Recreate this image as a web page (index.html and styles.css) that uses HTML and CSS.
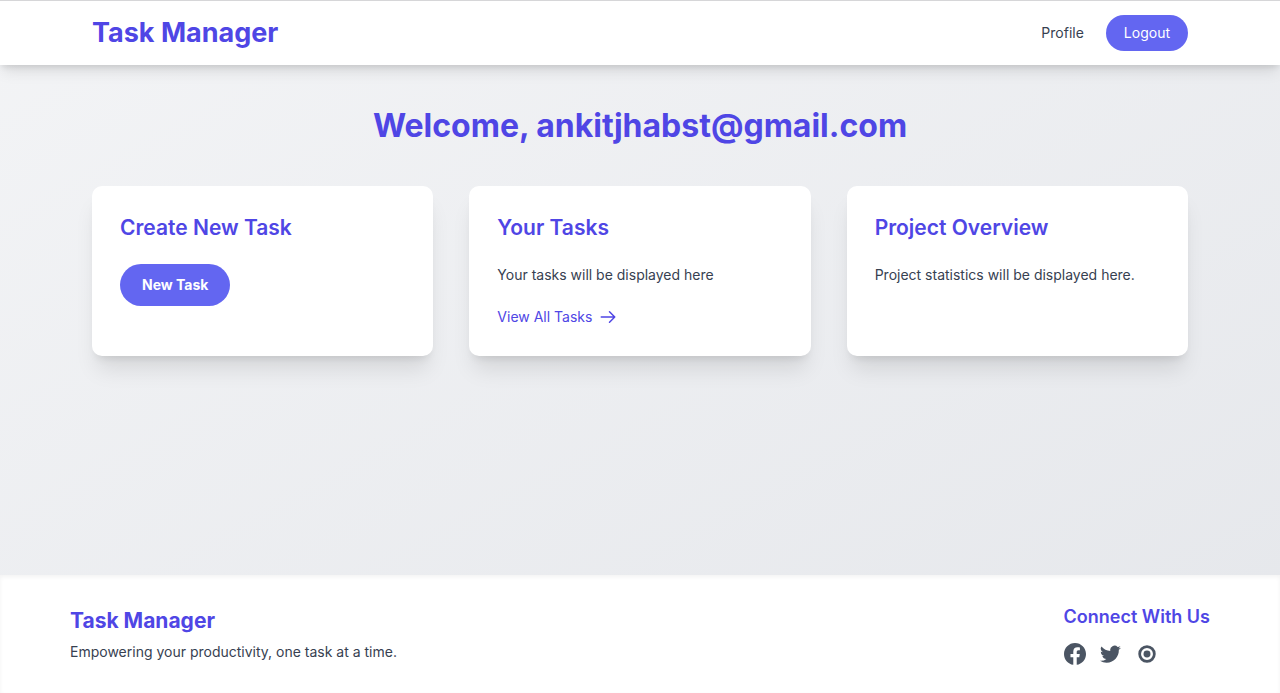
FILE: index.html
```html
<!DOCTYPE html>
<html lang="en">
<head>
  <meta charset="UTF-8">
  <meta name="viewport" content="width=device-width, initial-scale=1.0">
  <title>Task Manager</title>
  <link rel="stylesheet" href="styles.css">
</head>
<body>
  <header class="header">
    <div class="header__inner">
      <a class="header__brand" href="#">Task Manager</a>
      <nav class="header__nav">
        <a class="header__link" href="#">Profile</a>
        <button class="button button--small" type="button">Logout</button>
      </nav>
    </div>
  </header>

  <main class="main">
    <h1 class="main__title">Welcome, ankitjhabst@gmail.com</h1>
    <div class="cards">
      <section class="card">
        <h2 class="card__title">Create New Task</h2>
        <button class="button" type="button">New Task</button>
      </section>
      <section class="card">
        <h2 class="card__title">Your Tasks</h2>
        <p class="card__text">Your tasks will be displayed here</p>
        <a class="card__link" href="#">
          View All Tasks
          <svg class="card__arrow" viewBox="0 0 24 24" fill="none" stroke="currentColor" stroke-width="2" stroke-linecap="round" stroke-linejoin="round" aria-hidden="true">
            <path d="M14 5l7 7m0 0l-7 7m7-7H3"/>
          </svg>
        </a>
      </section>
      <section class="card">
        <h2 class="card__title">Project Overview</h2>
        <p class="card__text">Project statistics will be displayed here.</p>
      </section>
    </div>
  </main>

  <footer class="footer">
    <div class="footer__inner">
      <div class="footer__about">
        <h3 class="footer__brand">Task Manager</h3>
        <p class="footer__text">Empowering your productivity, one task at a time.</p>
      </div>
      <div class="footer__connect">
        <h4 class="footer__title">Connect With Us</h4>
        <div class="social">
          <a class="social__link" href="#" aria-label="Facebook">
            <svg viewBox="2 2 20 20" fill="currentColor" aria-hidden="true">
              <path fill-rule="evenodd" clip-rule="evenodd" d="M22 12c0-5.523-4.477-10-10-10S2 6.477 2 12c0 4.991 3.657 9.128 8.438 9.878v-6.987h-2.54V12h2.54V9.797c0-2.506 1.492-3.89 3.777-3.89 1.094 0 2.238.195 2.238.195v2.46h-1.26c-1.243 0-1.63.771-1.63 1.562V12h2.773l-.443 2.89h-2.33v6.988C18.343 21.128 22 16.991 22 12z"/>
            </svg>
          </a>
          <a class="social__link" href="#" aria-label="Twitter">
            <svg viewBox="2 1.5 21 21" fill="currentColor" aria-hidden="true">
              <path d="M8.29 20.251c7.547 0 11.675-6.253 11.675-11.675 0-.178 0-.355-.012-.53A8.348 8.348 0 0022 5.92a8.19 8.19 0 01-2.357.646 4.118 4.118 0 001.804-2.27 8.224 8.224 0 01-2.605.996 4.107 4.107 0 00-6.993 3.743 11.65 11.65 0 01-8.457-4.287 4.106 4.106 0 001.27 5.477A4.072 4.072 0 012.8 9.713v.052a4.105 4.105 0 003.292 4.022 4.095 4.095 0 01-1.853.07 4.108 4.108 0 003.834 2.85A8.233 8.233 0 012 18.407a11.616 11.616 0 006.29 1.84"/>
            </svg>
          </a>
          <a class="social__link" href="#" aria-label="Instagram">
            <svg viewBox="0 0 24 24" aria-hidden="true">
              <circle cx="12" cy="12" r="8" fill="none" stroke="currentColor" stroke-width="3"/>
              <circle cx="12" cy="12" r="3.8" fill="currentColor"/>
            </svg>
          </a>
        </div>
      </div>
    </div>
  </footer>
</body>
</html>
```
FILE: styles.css
```css
* {
  box-sizing: border-box;
  margin: 0;
  padding: 0;
}

body {
  display: flex;
  flex-direction: column;
  min-height: 100vh;
  font-family: Inter, "Liberation Sans", sans-serif;
  font-size: 14px;
  line-height: 22px;
  color: #374151;
  background: linear-gradient(to bottom right, #f3f4f6, #e5e7eb);
}

a {
  color: inherit;
  text-decoration: none;
}

/* Header */
.header {
  background: #fff;
  border-top: 1px solid #d6d6d8;
  box-shadow: 0 9px 14px -3px rgba(0, 0, 0, .1), 0 4px 6px -2px rgba(0, 0, 0, .1);
}

.header__inner {
  display: flex;
  justify-content: space-between;
  align-items: center;
  max-width: 1140px;
  margin: 0 auto;
  padding: 14px 22px;
}

.header__brand {
  font-size: 27px;
  line-height: 36px;
  font-weight: 700;
  color: #4f46e5;
}

.header__nav {
  display: flex;
  align-items: center;
  gap: 22px;
}

.button {
  padding: 10px 22px;
  border: none;
  border-radius: 999px;
  background: #6366f1;
  color: #fff;
  font: inherit;
  font-weight: 700;
  cursor: pointer;
}

.button--small {
  padding: 7px 18px;
  font-weight: 400;
}

.button:hover {
  background: #4f46e5;
}

/* Main */
.main {
  flex: 1;
  width: 100%;
  max-width: 1140px;
  margin: 0 auto;
  padding: 42px 22px;
}

.main__title {
  margin-bottom: 41px;
  font-size: 32px;
  line-height: 38px;
  font-weight: 700;
  text-align: center;
  color: #4f46e5;
}

.cards {
  display: grid;
  grid-template-columns: repeat(3, 1fr);
  gap: 36px;
}

.card {
  padding: 28px;
  border-radius: 10px;
  background: #fff;
  box-shadow: 0 18px 22px -5px rgba(0, 0, 0, .1), 0 7px 9px -5px rgba(0, 0, 0, .1);
}

.card__title {
  margin-bottom: 22px;
  font-size: 21px;
  line-height: 28px;
  font-weight: 600;
  color: #4f46e5;
}

.card__text {
  margin-bottom: 20px;
}

.card__link {
  display: inline-flex;
  align-items: center;
  gap: 7px;
  color: #4f46e5;
}

.card__arrow {
  width: 18px;
  height: 18px;
}

/* Footer */
.footer {
  background: #fff;
  box-shadow: inset 0 2px 4px rgba(0, 0, 0, .05);
}

.footer__inner {
  display: flex;
  justify-content: space-between;
  align-items: center;
  max-width: 1140px;
  margin: 0 auto;
  padding: 28px 0;
}

.footer__brand {
  margin-bottom: 5px;
  font-size: 21px;
  line-height: 30px;
  font-weight: 700;
  color: #4f46e5;
}

.footer__title {
  margin-bottom: 12px;
  font-size: 18px;
  line-height: 28px;
  font-weight: 600;
  color: #4f46e5;
}

.social {
  display: flex;
  gap: 14px;
}

.social__link {
  width: 22px;
  height: 22px;
  color: #4b5563;
}

.social__link svg {
  display: block;
}
```
